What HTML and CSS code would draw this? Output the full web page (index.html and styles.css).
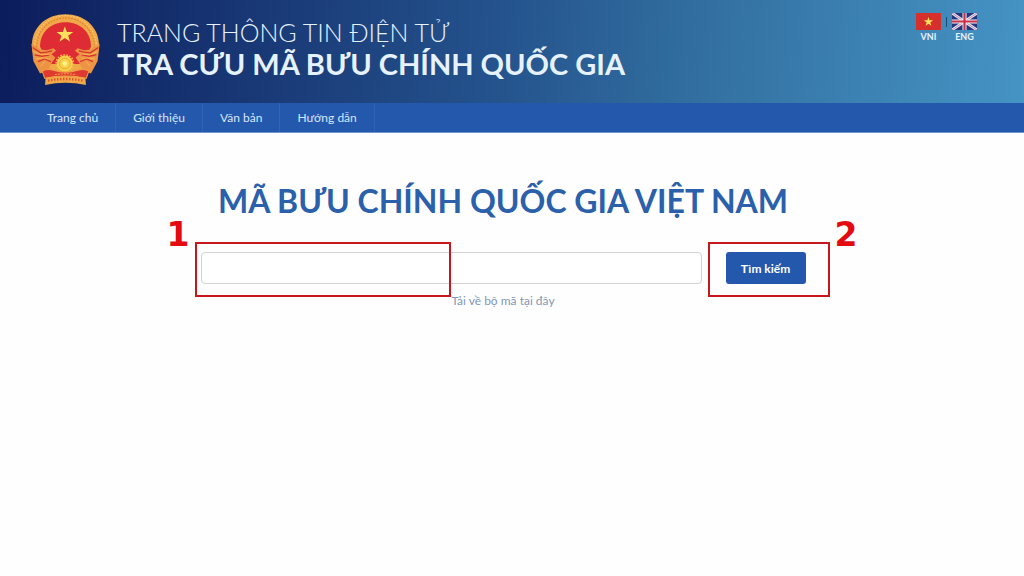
FILE: index.html
```html
<!DOCTYPE html>
<html lang="vi">
<head>
    <meta charset="UTF-8">
    <meta name="viewport" content="width=device-width, initial-scale=1.0">
    <title>Mã bưu chính quốc gia Việt Nam</title>
    <link rel="stylesheet" href="styles.css">
</head>
<body>
    <header class="header">
        <svg class="emblem" viewBox="30 25 212 214" aria-hidden="true">
            <!-- wreath -->
            <path d="M136 27C82 27 38 62 36 116c0 34 12 60 42 82l-3 40q61-14 122 0l-3-40c30-22 42-48 42-82C234 62 190 27 136 27z" fill="#f0a848"/>
            <path d="M58 160A86 86 0 1 1 214 160" fill="none" stroke="#dd7a34" stroke-width="3" stroke-dasharray="5 4"/>
            <path d="M52 160A92 92 0 1 1 220 160" fill="none" stroke="#ffd273" stroke-width="3" stroke-dasharray="4 5"/>
            <!-- red field -->
            <path d="M136 51c-44 0-76 30-76 72l24 52h104l24-52c0-42-32-72-76-72z" fill="#df2b33"/>
            <!-- rice sheaves -->
            <g fill="#ec9344">
                <path d="M34 114l26 18 20 2 20-6 8 8-14 10 12 10-10 14-12 24-24 10-20-38z"/>
                <path d="M238 114l-26 18-20 2-20-6-8 8 14 10-12 10 10 14 12 24 24 10 20-38z"/>
            </g>
            <g fill="none" stroke="#d9352f" stroke-width="4">
                <path d="M38 126l24 16 18-2 16-4M44 148l22 4 22-4M54 168l20-8 18 8"/>
                <path d="M234 126l-24 16-18-2-16-4M228 148l-22 4-22-4M218 168l-20-8-18 8"/>
            </g>
            <g fill="none" stroke="#ffc65c" stroke-width="2">
                <path d="M40 138l24 10 24-2M48 160l22-3 18 4M62 182l12-14"/>
                <path d="M232 138l-24 10-24-2M224 160l-22-3-18 4M210 182l-12-14"/>
            </g>
            <!-- cog wheel -->
            <circle cx="134" cy="174" r="24" fill="#f7d34b"/>
            <circle cx="134" cy="174" r="26" fill="none" stroke="#f5b641" stroke-width="5" stroke-dasharray="5 4"/>
            <circle cx="134" cy="174" r="16" fill="none" stroke="#e88c32" stroke-width="2"/>
            <circle cx="134" cy="174" r="7" fill="#fff08a"/>
            <!-- ribbon -->
            <path d="M66 196q18-8 34-2 36 12 72 0 16-6 34 2l-8 22q-62-14-124 0z" fill="#e03a30" stroke="#efa04a" stroke-width="3"/>
            <path d="M104 207q32-5 64 0" fill="none" stroke="#f2a44c" stroke-width="3" stroke-dasharray="6 3"/>
            <path d="M84 225q52-10 104 0" fill="none" stroke="#d9502c" stroke-width="7" stroke-dasharray="4 5"/>
            <path d="M134 63l6 17h19l-15 11 6 18-16-11-16 11 6-18-15-11h19z" fill="#ffe05a"/>
        </svg>
        <div class="brand">
            <div class="brand-sub">TRANG THÔNG TIN ĐIỆN TỬ</div>
            <div class="brand-name">TRA CỨU MÃ BƯU CHÍNH QUỐC GIA</div>
        </div>
        <div class="languages">
            <a href="#vni">
                <svg class="flag" viewBox="0 0 25 17" aria-hidden="true">
                    <rect width="25" height="17" fill="#d6302c"/>
                    <path d="M12.500 4l1.100 3.300h3.500l-2.800 2.100 1.100 3.400-2.900-2.100-2.900 2.100 1.100-3.400-2.800-2.100h3.500z" fill="#ffe45a"/>
                </svg>
                VNI
            </a>
            <span class="divider"></span>
            <a href="#eng">
                <svg class="flag" viewBox="0 0 25 17" aria-hidden="true">
                    <rect width="25" height="17" fill="#26367c"/>
                    <path d="M0 0l25 17M25 0L0 17" stroke="#dfe6f5" stroke-width="2.800"/>
                    <path d="M0 0l25 17M25 0L0 17" stroke="#cf6a80" stroke-width="0.800"/>
                    <path d="M12.500 0v17M0 8.500h25" stroke="#f1f3fa" stroke-width="4"/>
                    <path d="M12.500 0v17M0 8.500h25" stroke="#cb2f45" stroke-width="2.200"/>
                </svg>
                ENG
            </a>
        </div>
    </header>

    <nav class="menu">
        <a href="#home">Trang chủ</a>
        <a href="#about">Giới thiệu</a>
        <a href="#documents">Văn bản</a>
        <a href="#guide">Hướng dẫn</a>
    </nav>

    <main class="content">
        <h1>MÃ BƯU CHÍNH QUỐC GIA VIỆT NAM</h1>
        <form class="search">
            <div class="search-field">
                <input type="text" name="keyword" aria-label="Mã bưu chính">
                <div class="mark mark-field"><span>1</span></div>
            </div>
            <div class="search-action">
                <button type="submit">Tìm kiếm</button>
                <div class="mark mark-action"><span>2</span></div>
            </div>
        </form>
        <a class="download" href="#download">Tải về bộ mã tại đây</a>
    </main>
</body>
</html>
```
FILE: styles.css
```css
* {
    box-sizing: border-box;
}

body {
    font-family: Lato, "Open Sans", sans-serif;
    font-size: 12px;
    margin: 0;
    background: #fefefe;
}

a {
    color: inherit;
    text-decoration: none;
}

/* Header */
.header {
    display: flex;
    align-items: flex-start;
    height: 103px;
    padding: 13px 47px 0 30px;
    background: linear-gradient(95deg, #0c1c5c, #24528c 48%, #326fa0 68%, #4594c4);
    color: #e6f2ff;
}

.emblem {
    width: 71px;
    height: 73px;
    margin-right: 16px;
}

.brand {
    flex: 1;
    padding-top: 4px;
}

.brand-sub {
    font-size: 25px;
    font-weight: 300;
    line-height: 30px;
}

.brand-name {
    font-size: 29px;
    font-weight: bold;
    line-height: 34px;
}

/* Language switch */
.languages {
    display: flex;
    gap: 5px;
    font-size: 9px;
    font-weight: bold;
    line-height: 13px;
    text-align: center;
}

.flag {
    display: block;
    width: 25px;
    height: 17px;
}

.divider {
    width: 1px;
    height: 10px;
    margin-top: 4px;
    background: #1c4a74;
}

/* Menu */
.menu {
    display: flex;
    height: 30px;
    padding-left: 30px;
    background: #2458ad;
    border-bottom: 1px solid #6f93cb;
    color: #d8e6fb;
    line-height: 29px;
}

.menu a {
    padding: 0 17px;
    border-right: 1px solid #2f63b5;
}

/* Search */
.content {
    padding: 48px 18px 0 0;
    text-align: center;
}

h1 {
    margin: 0 0 31px;
    color: #2b60ab;
    font-size: 32px;
    line-height: 40px;
}

.search {
    display: flex;
    justify-content: center;
    gap: 24px;
    max-width: 605px;
    margin: 0 auto 8px;
}

.search-field {
    flex: 1;
    position: relative;
}

.search-action {
    position: relative;
}

input {
    display: block;
    width: 100%;
    height: 32px;
    padding: 0 10px;
    border: 1px solid #d2d2d2;
    border-radius: 4px;
    background: white;
    font: inherit;
}

button {
    display: block;
    width: 80px;
    height: 32px;
    padding: 0;
    border: none;
    border-radius: 3px;
    background: #2458ad;
    color: white;
    font: bold 12px Lato, "Open Sans", sans-serif;
    cursor: pointer;
}

.download {
    color: #8497b5;
    line-height: 18px;
}

/* Numbered step marks over the form */
.mark {
    position: absolute;
    top: -10px;
    bottom: -13px;
    border: 2px solid #c8171c;
    pointer-events: none;
}

.mark-field {
    left: -6px;
    width: 256px;
}

.mark-action {
    left: -18px;
    right: -24px;
}

.mark span {
    position: absolute;
    top: -27px;
    color: #e30b10;
    font: bold 33px/36px "DejaVu Sans", sans-serif;
}

.mark-field span {
    right: 100%;
    margin-right: 7px;
}

.mark-action span {
    left: 100%;
    margin-left: 7px;
}
```
